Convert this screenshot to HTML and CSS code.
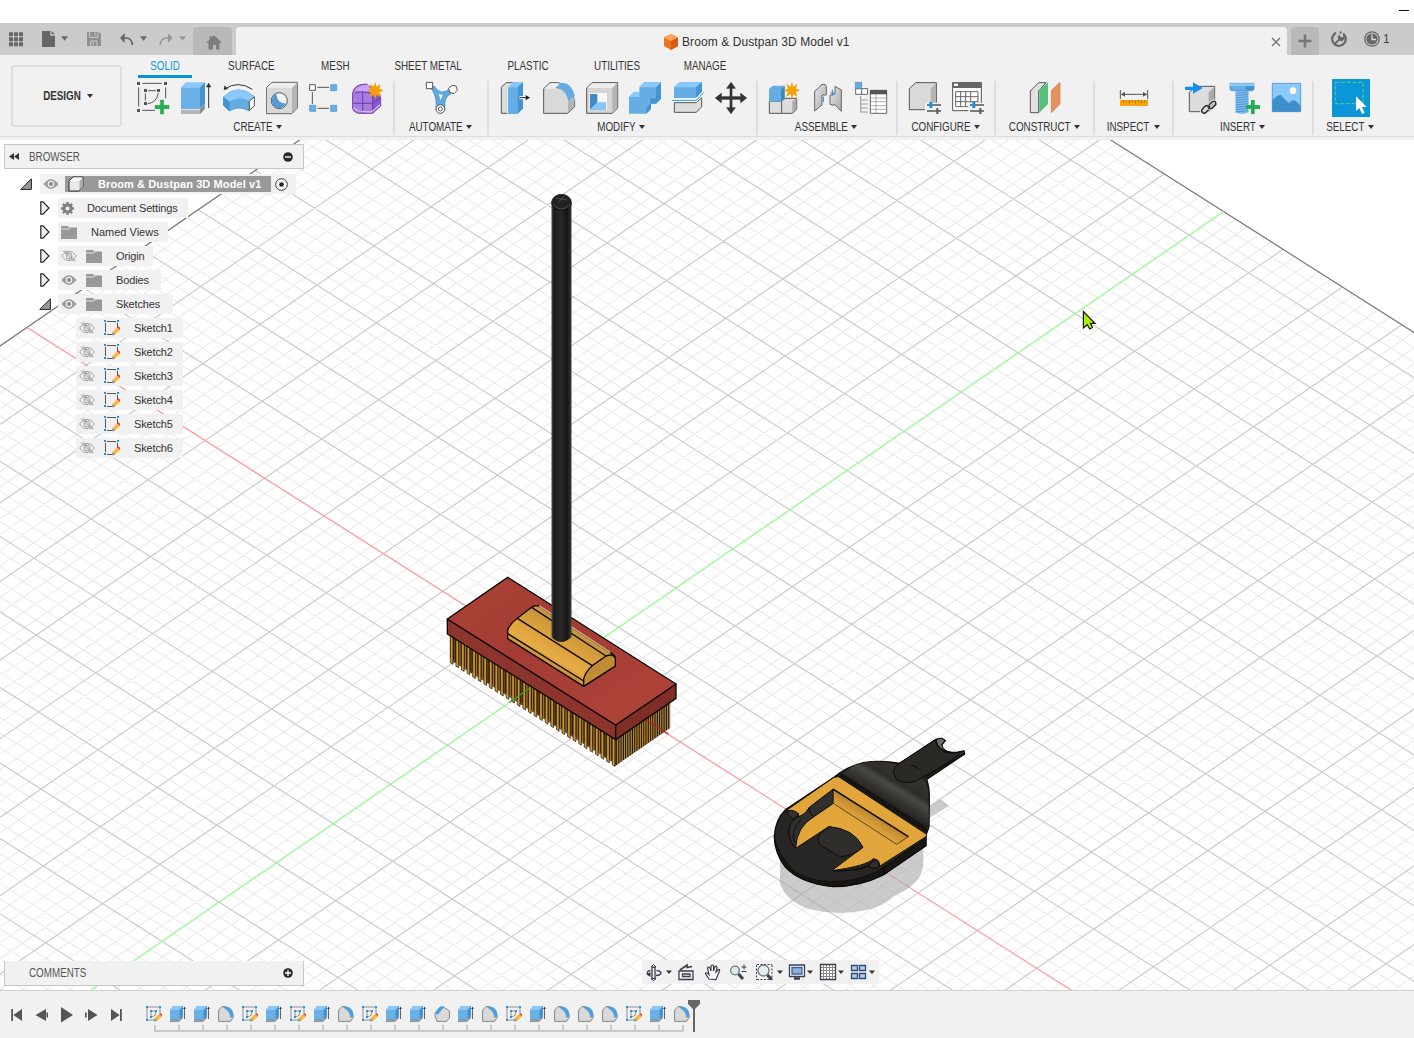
FILE: index.html
```html
<!DOCTYPE html>
<html lang="en">
<head>
<meta charset="utf-8">
<title>Broom &amp; Dustpan 3D Model v1</title>
<link rel="stylesheet" href="styles.css">
</head>
<body>
<svg class="defs" width="0" height="0" aria-hidden="true">
  <defs>
    <linearGradient id="pole"><stop offset="0" stop-color="#4a4a48"/><stop offset=".12" stop-color="#1b1b19"/><stop offset=".45" stop-color="#2a2927"/><stop offset=".8" stop-color="#151513"/><stop offset="1" stop-color="#3c3c3a"/></linearGradient>
    <linearGradient id="redtop" x1="0" y1="0" x2="1" y2="1"><stop offset="0" stop-color="#ad4338"/><stop offset=".4" stop-color="#a33c33"/><stop offset="1" stop-color="#b0443a"/></linearGradient>
    <linearGradient id="hub" gradientUnits="userSpaceOnUse" x1="350" y1="330" x2="420" y2="210"><stop offset="0" stop-color="#b67c26"/><stop offset=".3" stop-color="#e6ac45"/><stop offset=".6" stop-color="#dda23b"/><stop offset="1" stop-color="#c9963c"/></linearGradient>
    <linearGradient id="pan" gradientUnits="userSpaceOnUse" x1="340" y1="240" x2="400" y2="140"><stop offset="0" stop-color="#1d1c1a"/><stop offset=".3" stop-color="#33322f"/><stop offset=".55" stop-color="#4a4946"/><stop offset=".7" stop-color="#2e2d2a"/><stop offset="1" stop-color="#33322f"/></linearGradient>
    <linearGradient id="wall" gradientUnits="userSpaceOnUse" x1="310" y1="315" x2="335" y2="275"><stop offset="0" stop-color="#e3a840"/><stop offset="1" stop-color="#b98429"/></linearGradient>
    <linearGradient id="steel" x2="1" y2="1"><stop offset="0" stop-color="#e8e8e8"/><stop offset="1" stop-color="#a8a8a8"/></linearGradient>
    <symbol id="i-eye" viewBox="0 0 16 12"><path d="M.5 6Q8-3.5 15.500 6Q8 15.500.5 6Z" fill="#9b9b9b"/><circle cx="8" cy="6" r="3.300" fill="#eee"/><circle cx="8" cy="6" r="2.100" fill="#8a8a8a"/></symbol>
    <symbol id="i-hidden" viewBox="0 0 16 12"><g fill="none" stroke="#929292" stroke-width=".9"><path d="M.5 6Q8-3.500 15.500 6Q8 15.500.5 6Z"/><circle cx="8" cy="6" r="3"/><path d="M2 .5L13 11.500M4 .3L14.500 11"/></g></symbol>
    <symbol id="i-folder" viewBox="0 0 16 13"><path d="M0 0H7L8 1.500H16V13H0Z" fill="#999"/><path d="M0 3H8L9 1.800" stroke="#ddd" fill="none"/></symbol>
    <symbol id="i-sk" viewBox="0 0 16 16"><path d="M3 1.500H12M13.500 3V8M1.500 3V12M3 14.500H8" fill="none" stroke="#555"/><path d="M0 0h2v2H0zM13 0h2v2h-2zM0 13h2v2H0z" fill="#1b8fe6"/><path d="M8.500 12L13 7.500L16 10L11 14.800Z" fill="#f5b942"/><path d="M13 7.500L14.300 6.200L16 7.500V10Z" fill="#ee3b3b"/><path d="M8.500 12L8 15.500L11 14.800Z" fill="#888"/></symbol>
    <symbol id="i-closed" viewBox="0 0 10 14"><path d="M.8.8H3L9 7L3 13.200H.8Z" fill="#ededed" stroke="#222" stroke-width="1.200"/></symbol>
    <symbol id="i-open" viewBox="0 0 12 12"><path d="M.8 11.400H11.400V.8Z" fill="#999" stroke="#222"/></symbol>
    <symbol id="t-sketch" viewBox="0 0 16 16"><path d="M2 1H13M14 2V7M1 2V13M2 14H8M5 6V10M6 5H9M10 6Q10 10 6 11" fill="none" stroke="#8f8f8f"/><path d="M0 0h2v2H0zM13 0h2v2h-2zM0 13h2v2H0zM4 4h2v2H4zM9 4h2v2H9zM4 10h2v2H4z" fill="#2b97e8"/><path d="M8.500 12L13 8L16 10.500L11 15Z" fill="#f5b942"/><path d="M13 8L14.500 7L16 8.500V10.500Z" fill="#ee3b3b"/><path d="M8.500 12L8 15.500L11 15Z" fill="#888"/></symbol>
    <symbol id="t-ext" viewBox="0 0 16 16"><path d="M0 13.500V16H9L13 12V9Z" fill="#999"/><path d="M0 4L3 0H13V10L9.500 13.500H0Z" fill="#4793d0"/><path d="M0 4H9.500V13.500H0Z" fill="#6aafe5"/><path d="M0 4L3 0H13L9.500 4Z" fill="#8cc8fa"/><path d="M14.500 2V13" stroke="#666"/><path d="M13.200 3L14.500 .5L15.800 3Z" fill="#333"/></symbol>
    <symbol id="t-fil" viewBox="0 0 16 16"><path d="M.6 4L4 .6H7Q14 3 15.400 11L12.500 15.400H.6Z" fill="#d9d9d9" stroke="#888"/><path d="M5 1.500Q7 .3 10 .8Q15.500 3 15.500 10L12.500 12Q12 5 5 1.500Z" fill="#4c9ede"/></symbol>
    <symbol id="t-cham" viewBox="0 0 16 16"><path d="M.6 9L9 .8L15.400 5V12L12.500 15.400H3Z" fill="#d9d9d9" stroke="#888"/><path d="M0 7.500L6 .5H10.500L4 8.500Z" fill="#4c9ede"/></symbol>
  </defs>
</svg>

<div class="titlebar"><i class="minimize"></i></div>

<div class="tabbar">
  <div class="quick">
    <svg width="193" height="32" viewBox="0 69 579 96">
      <path d="M27 97h12v12H27zm15 0h12v12H42zm15 0h12v12H57zM27 112h12v12H27zm15 0h12v12H42zm15 0h12v12H57zM27 127h12v12H27zm15 0h12v12H42zm15 0h12v12H57z" fill="#666"/>
      <path d="M126 93H151V107H165V141H126Z M155 93L165 103H155Z" fill="#666"/><path d="M183 109H204L194 122Z" fill="#666"/>
      <path d="M261 96H297L303 102V138H261Z" fill="#8f8f8f"/><path d="M269 96V112H294V96M272 138V123H291V138" fill="none" stroke="#cbcbcb" stroke-width="3"/><path d="M285 97v10M279 127v8" stroke="#cbcbcb" stroke-width="3"/>
      <path d="M364 114H378Q396 114 397 135" fill="none" stroke="#666" stroke-width="5"/><path d="M360 114L374 99V129Z" fill="#666"/><path d="M420 109H441L431 122Z" fill="#666"/>
      <path d="M514 114H500Q482 114 481 135" fill="none" stroke="#999" stroke-width="5"/><path d="M518 114L504 99V129Z" fill="#999"/><path d="M537 109H558L548 122Z" fill="#999"/>
    </svg>
  </div>
  <div class="hometab"><svg width="16" height="15" viewBox="0 0 16 15"><path d="M8 0L16 8H13.500V14.500H10V10H7V14.500H2.500V8H0L3.500 4.500V1H5.500V2.500Z" fill="#7d7d7d"/></svg></div>
  <div class="doctab">
    <div class="doctitle"><svg width="14" height="16" viewBox="0 0 14 16"><path d="M7 0L14 3.500V12L7 16L0 12V3.500Z" fill="#ed7425"/><path d="M7 0L14 3.500L7 7L0 3.500Z" fill="#ffa25c"/><path d="M7 7L14 3.500V12L7 16Z" fill="#d75b13"/></svg><span>Broom &amp; Dustpan 3D Model v1</span></div>
    <svg class="close" width="10" height="10" viewBox="0 0 10 10"><path d="M1 1L9 9M9 1L1 9" stroke="#777" stroke-width="1.500"/></svg>
  </div>
  <div class="plustab"><svg width="14" height="14" viewBox="0 0 14 14"><path d="M7 .5V13.500M.5 7H13.500" stroke="#777" stroke-width="2.600"/></svg></div>
  <div class="status">
    <svg width="16" height="16" viewBox="0 0 16 16"><circle cx="8" cy="8" r="6.800" fill="none" stroke="#666" stroke-width="2.200" stroke-dasharray="35 3.500 2 2.200" transform="rotate(-52 8 8)"/><path d="M3 12L7.500 8L6.500 6L8.500 3.500L9.500 6L11.500 6.500L13 4L14 7.500L11 10.500L8.500 9.500L4.500 13.500Z" fill="#666"/></svg>
    <svg width="16" height="16" viewBox="0 0 16 16"><circle cx="8" cy="8" r="7.200" fill="none" stroke="#666" stroke-width="1.300"/><circle cx="8" cy="8" r="5.600" fill="#666"/><path d="M8 3.500V8.500H12" stroke="#ddd" stroke-width="1.300" fill="none"/></svg>
    <span>1</span>
  </div>
</div>

<div class="ribbon">
  <div class="workspace"><b class="narrow">DESIGN</b><i class="caret"></i></div>
  <div class="ribbonmain">
    <div class="tabs">
      <div class="tab tab-solid active"><span class="narrow">SOLID</span></div>
      <div class="tab tab-surface"><span class="narrow">SURFACE</span></div>
      <div class="tab tab-mesh"><span class="narrow">MESH</span></div>
      <div class="tab tab-sheet"><span class="narrow">SHEET METAL</span></div>
      <div class="tab tab-plastic"><span class="narrow">PLASTIC</span></div>
      <div class="tab tab-util"><span class="narrow">UTILITIES</span></div>
      <div class="tab tab-manage"><span class="narrow">MANAGE</span></div>
    </div>
    <div class="groups">
      <div class="group g-create">
        <div class="icons">
          <svg viewBox="411 243 102 102"><path d="M416 262V320M427 250H486M497 262V295M427 331H465M436 280V302M444 272H468M475 279Q470 308 443 311" fill="none" stroke="#555" stroke-width="3"/><path d="M411 246h9v9h-9zM492 246h9v9h-9zM411 327h9v9h-9zM432 267h9v9h-9zM471 267h9v9h-9zM432 306h9v9h-9z" fill="#555"/><path d="M481 300H491V316H507V326H491V342H481V326H465V316H481Z" fill="#25ad51" stroke="#168a3b"/></svg>
          <svg viewBox="540 243 102 102"><path d="M543 329H600L614 314V327L600 342H543Z" fill="#b5b5b5"/><path d="M600 329L614 314V327L600 342Z" fill="#888"/><path d="M543 262L558 247H615L600 262Z" fill="#8ac9fc"/><path d="M600 262L615 247V312L600 327Z" fill="#4593cf"/><path d="M543 262H600V327H543Z" fill="#6aafe5"/><path d="M626 260V324" stroke="#333" stroke-width="3"/><path d="M618 262L626 248L634 262Z" fill="#333"/></svg>
          <svg viewBox="669 243 102 102"><path d="M674 267Q715 240 757 268" fill="none" stroke="#333" stroke-width="3"/><path d="M671 270L674 256L684 267Z" fill="#333"/><path d="M670 291Q715 248 763 290L748 303V333Q715 315 688 333L670 316Z" fill="#65ace3" stroke="#3d84bd" stroke-width="2"/><path d="M670 291Q715 248 763 290L748 303Q715 285 689 305Z" fill="#8ac9fc"/><path d="M670 291L689 305V333L670 316Z" fill="#4593cf"/><path d="M748 303L763 291V318L748 331Z" fill="#fff" stroke="#555" stroke-width="3"/></svg>
          <svg viewBox="798 243 102 102"><path d="M799 263L816 247H892V324L876 341H799Z" fill="#d9d9d9" stroke="#666" stroke-width="3"/><path d="M876 263L891 249V324L876 340Z" fill="#b4b4b4"/><path d="M801 263L816 249H890L876 263Z" fill="#eee"/><circle cx="838" cy="302" r="24" fill="#f3f3f3" stroke="#555" stroke-width="3"/><path d="M829 282A22 22 0 1 0 858 310Q832 312 829 282Z" fill="#529ad4"/></svg>
          <svg viewBox="927 243 102 102"><path d="M952 262H987M937 276V312M952 325H987" stroke="#555" stroke-width="3"/><path d="M929 254h17v17h-17z" fill="#fff" stroke="#555" stroke-width="3"/><path d="M992 254h18v18h-18zM929 316h18v18h-18zM992 316h18v18h-18z" fill="#6aafe5" stroke="#438dc7" stroke-width="2"/></svg>
          <svg viewBox="1056 243 102 102"><path d="M1058 278Q1062 252 1100 252L1142 290V318L1118 340H1076Q1057 337 1057 318Z" fill="#a77bdf" stroke="#7347af" stroke-width="3"/><path d="M1064 272Q1078 254 1105 255L1116 275Z" fill="#c9a4f8"/><path d="M1118 290L1142 282V318L1118 339Z" fill="#8b56cc"/><path d="M1065 280Q1090 270 1118 283M1060 310H1118L1142 292M1088 275V338M1118 280V338" fill="none" stroke="#6c3fa5" stroke-width="3"/><path d="M1062 322Q1066 337 1116 335L1140 314" fill="none" stroke="#d3bcf0" stroke-width="4"/><path d="M1126 246L1130 260L1142 252L1138 266L1151 271L1138 277L1143 291L1130 284L1126 297L1121 284L1108 291L1113 277L1101 271L1113 266L1109 252L1121 259Z" fill="#f6a109"/></svg>
        </div>
        <div class="label"><span class="narrow">CREATE</span><i class="caret"></i></div>
      </div>
      <div class="group g-automate long">
        <div class="icons"><svg viewBox="105 93 102 102"><path d="M122 114Q142 136 138 178A14 14 0 0 0 165 178Q160 140 184 130L177 118Q152 138 132 108Z" fill="#5fa8e0" stroke="#3e86bf" stroke-width="2"/><path d="M146 132L158 134L152 150Z" fill="#fff"/><path d="M109 97h19v19h-19z" fill="#fff" stroke="#555" stroke-width="3"/><path d="M186 106L198 108L202 121L192 131L179 127L176 115Z" fill="#fff" stroke="#555" stroke-width="3"/><circle cx="151" cy="177" r="13" fill="#fff" stroke="#555" stroke-width="3"/><circle cx="151" cy="177" r="6" fill="none" stroke="#555" stroke-width="3"/></svg></div>
        <div class="label"><span class="narrow">AUTOMATE</span><i class="caret"></i></div>
      </div>
      <div class="group g-modify">
        <div class="icons">
          <svg viewBox="330 93 102 102"><path d="M334 112L348 98H370L352 112V190H334Z" fill="#ddd" stroke="#555" stroke-width="3"/><path d="M350 112L367 97V190H350Z" fill="#f1f1f1"/><path d="M354 112L369 97H399V175L382 192H354Z" fill="#66ade4"/><path d="M354 112L369 97H399L383 112Z" fill="#8ac9fc"/><path d="M383 112L399 97V175L383 191Z" fill="#4593cf"/><path d="M389 143H412" stroke="#fff" stroke-width="9"/><path d="M390 143H410" stroke="#222" stroke-width="3"/><path d="M407 135L420 143L407 151Z" fill="#222"/></svg>
          <svg viewBox="459 93 102 102"><path d="M461 116L480 98H505Q548 110 554 155V170L533 190H461Z" fill="#d9d9d9" stroke="#555" stroke-width="3"/><path d="M463 116L481 100H507L496 116Z" fill="#eee"/><path d="M496 114L513 98Q545 98 554 137L535 155Q530 118 496 114Z" fill="#65ace3"/><path d="M534 158L553 140V168L534 188Z" fill="#b4b4b4"/></svg>
          <svg viewBox="588 93 102 102"><path d="M590 114L606 98H683V174L667 190H590Z" fill="#d5d5d5" stroke="#555" stroke-width="3"/><path d="M592 114L607 100H681L667 114Z" fill="#eee"/><path d="M667 114L682 99V173L667 189Z" fill="#b4b4b4"/><path d="M598 129H651V180H598Z" fill="#fafafa"/><path d="M600 132L622 132V158L600 180Z" fill="#3f8bc5"/><path d="M600 180L622 157H648V180Z" fill="#87c5f7"/></svg>
          <svg viewBox="717 93 102 102"><path d="M748 112L762 97H813V146L798 161H783V177L769 191H717V141L731 127H748Z" fill="#66ade4"/><path d="M798 112L813 97V146L798 161H783V177L769 191V175L781 160V145L798 145Z" fill="#4593cf"/><path d="M748 112L762 97H813L798 112ZM717 141L731 127H748V141Z" fill="#8ac9fc"/></svg>
          <svg viewBox="846 93 102 102"><path d="M852 112L868 97H936V125L917 144H852Z" fill="#66ade4"/><path d="M852 112L868 97H936L918 112Z" fill="#8ac9fc"/><path d="M918 112L936 97V125L918 144Z" fill="#4593cf"/><path d="M853 158H919L935 143V170L919 187H853Z" fill="#ddd" stroke="#555" stroke-width="3"/><path d="M846 151H919L941 128" fill="none" stroke="#fff" stroke-width="9"/><path d="M846 151H919L941 128" fill="none" stroke="#168ded" stroke-width="3"/></svg>
          <svg viewBox="975 93 102 102"><path d="M1023 97L1036 115H1026V140H1052V130L1070 144L1052 158V148H1026V173H1036L1023 191L1010 173H1020V148H994V158L976 144L994 130V140H1020V115H1010Z" fill="#333" stroke="#333" stroke-width="2"/></svg>
        </div>
        <div class="label"><span class="narrow">MODIFY</span><i class="caret"></i></div>
      </div>
      <div class="group g-assemble long">
        <div class="icons">
          <svg viewBox="54 93 102 102"><path d="M58 154H95L105 145H140V178L127 190H58Z" fill="#ddd" stroke="#555" stroke-width="3"/><path d="M127 154L139 146V178L127 189Z" fill="#aaa"/><path d="M95 155V190" stroke="#555" stroke-width="3"/><path d="M57 117L69 107H104V146L93 155H57Z" fill="#65ace3"/><path d="M93 119L104 108V146L93 155Z" fill="#3f86bf"/><path d="M126 96L130 110L142 101L138 116L151 121L138 126L142 141L130 133L126 146L121 133L108 141L113 126L101 121L113 116L109 101L121 110Z" fill="#f6a109"/></svg>
          <svg viewBox="183 93 102 102"><g stroke="#666" stroke-width="3" fill="url(#steel)"><path d="M194 123L208 112L214 104Q229 100 229 111V135H216V165L194 183Z"/><path d="M274 120L255 109V132L240 136V163Q250 168 255 164L274 184Z"/></g><path d="M220 140V156M247 119V137M241 129H253" stroke="#168ded" stroke-width="3"/></svg>
          <svg viewBox="312 93 102 102"><path d="M317 116H353V133H317ZM335 116V133" fill="#fff" stroke="#666" stroke-width="3"/><path d="M316 97h19v19h-19z" fill="#65ace3" stroke="#3e86bf" stroke-width="2"/><path d="M332 138V187M332 150H353M332 162H353M332 174H353M332 186H353" stroke="#999" stroke-width="3"/><path d="M361 121h49v69h-49z" fill="#fff" stroke="#666" stroke-width="3"/><path d="M360 120h51v13h-51z" fill="#555"/><path d="M378 133V189M361 144H410M361 155H410M361 167H410M361 178H410" stroke="#888" stroke-width="2"/></svg>
        </div>
        <div class="label"><span class="narrow">ASSEMBLE</span><i class="caret"></i></div>
      </div>
      <div class="group g-configure long">
        <div class="icons">
          <svg viewBox="474 93 102 102"><path d="M478 116L497 98H559V162L543 179H478Z" fill="#d9d9d9" stroke="#555" stroke-width="3"/><path d="M542 116L558 99V164L542 178Z" fill="#b4b4b4"/><path d="M525 158H580V195H525Z" fill="#f1f1f1"/><path d="M531 165H573M531 183H573" stroke="#555" stroke-width="4"/><path d="M538 156H547V174H538Z" fill="#168ded"/><path d="M559 174h6v18h-6z" fill="#555"/></svg>
          <svg viewBox="603 93 102 102"><path d="M608 98H694V182H608Z" fill="#fff" stroke="#555" stroke-width="3"/><path d="M607 97h88v17h-88z" fill="#666"/><path d="M612 101h12v7h-12z" fill="#fff"/><path d="M617 125H684V170H617ZM617 140H684M617 155H684M632 125V170M647 125V170M662 125V170" fill="none" stroke="#666" stroke-width="3"/><path d="M655 158H705V195H655Z" fill="#f1f1f1"/><path d="M660 165H702M660 183H702" stroke="#555" stroke-width="4"/><path d="M667 156H676V174H667Z" fill="#168ded"/><path d="M688 174h6v18h-6z" fill="#555"/></svg>
        </div>
        <div class="label"><span class="narrow">CONFIGURE</span><i class="caret"></i></div>
      </div>
      <div class="group g-construct long">
        <div class="icons"><svg viewBox="834 93 102 102"><path d="M841 123L866 98H888L866 123V188H841Z" fill="#e2e2e2" stroke="#555" stroke-width="3"/><path d="M868 121L894 97V162L868 188Z" fill="#55c078"/><path d="M904 121L930 97V162L904 188Z" fill="#e3935f" stroke="#d17a43" stroke-width="2"/></svg></div>
        <div class="label"><span class="narrow">CONSTRUCT</span><i class="caret"></i></div>
      </div>
      <div class="group g-inspect">
        <div class="icons"><svg viewBox="111 243 102 102"><path d="M121 270V297M203 270V297M128 283H196" stroke="#555" stroke-width="3"/><path d="M122 283L135 276V290ZM202 283L189 276V290Z" fill="#555"/><path d="M120 300h84v18h-84z" fill="#f9a50a"/><path d="M130 301v7M139 301v5M148 301v9M157 301v5M166 301v9M175 301v5M184 301v9M194 301v7" stroke="#7a4d00" stroke-width="2"/></svg></div>
        <div class="label"><span class="narrow">INSPECT</span><i class="caret"></i></div>
      </div>
      <div class="group g-insert">
        <div class="icons">
          <svg viewBox="312 243 102 102"><path d="M328 277L346 259H404V317L387 335H328Z" fill="#ddd" stroke="#555" stroke-width="3"/><path d="M386 277L403 261V318L386 334Z" fill="#aaa"/><path d="M315 260H339V247L368 264L339 281V270H315Z" fill="#168ded"/><g fill="none"><path d="M389 313L397 305Q409 300 407 314L396 325Q387 329 384 320M390 322Q382 313 374 320L365 330Q365 341 376 339L386 329" stroke="#f1f1f1" stroke-width="10"/><path d="M387 315L397 305Q409 300 407 314L396 325Q387 329 384 320M391 322Q382 313 374 320L365 330Q365 341 376 339L386 329" stroke="#333" stroke-width="5"/></g></svg>
          <svg viewBox="441 243 102 102"><path d="M450 250H522V268L518 272H454L450 268Z" fill="#65ace3" stroke="#3e86bf" stroke-width="2"/><path d="M450 250H522V258H450Z" fill="#8ac9fc"/><path d="M497 258H522V270H497Z" fill="#4593cf"/><path d="M467 273H505V337Q486 347 467 337Z" fill="#7bbcf0"/><path d="M466 280L506 276M466 287L506 283M466 294L506 290M466 301L506 297M466 308L506 304M466 315L506 311M466 322L506 318M466 329L506 325M466 336L506 332" stroke="#3e86bf" stroke-width="2"/><path d="M513 300H524V315H540V327H524V342H513V327H498V315H513Z" fill="#25ad51"/></svg>
          <svg viewBox="570 243 102 102"><path d="M577 250h85v85h-85z" fill="#8ac9fc" stroke="#5c9fd6" stroke-width="3"/><path d="M577 301Q592 285 602 284L625 309L636 302Q645 297 662 318V335H577Z" fill="#3f8fcb"/><circle cx="639" cy="272" r="10" fill="#fffce0"/></svg>
        </div>
        <div class="label"><span class="narrow">INSERT</span><i class="caret"></i></div>
      </div>
      <div class="group g-select">
        <div class="icons"><svg class="big" viewBox="756 237 114 114"><path d="M756 237h114v114H756z" fill="#0c96da"/><path d="M766 247H849V311H766Z" fill="none" stroke="#4fd07c" stroke-width="3" stroke-dasharray="12 5"/><path d="M828 289V333L838 324L846 342L854 338L846 321H860Z" fill="#fff"/></svg></div>
        <div class="label"><span class="narrow">SELECT</span><i class="caret"></i></div>
      </div>
    </div>
  </div>
</div>

<div class="viewport">
  <svg class="scene" width="1414" height="850" viewBox="0 140 1414 850">
    <g id="grid"></g>
    <g transform="translate(430 560) scale(.33333)" stroke-linejoin="round">
      <g id="bristles"></g>
      <path d="M303 381L238 427" stroke="#3f9a1f" stroke-width="4"/>
      <path d="M650 480L715 522" stroke="#b3251a" stroke-width="4"/>
      <g stroke="#0c0807" stroke-width="4">
        <path d="M52 177L557 495V539L52 222Z" fill="#8d352d"/>
        <path d="M557 495L738 372V415L557 539Z" fill="#7f2e27"/>
        <path d="M233 52L738 372L557 495L52 177Z" fill="url(#redtop)"/>
        <path d="M233 236V210Q240 192 262 175L305 142Q315 134 326 138L545 280Q556 286 556 297V318L461 379Z" fill="url(#hub)"/>
        <path d="M461 379V357Q466 335 487 317L528 288Q550 280 556 294V318Z" fill="#c28c34"/>
        <path d="M262 175L487 317M305 142L528 288M233 221L461 363" fill="none"/>
      </g>
      <path d="M328 138L541 277" stroke="#c9a781" stroke-width="5"/>
    </g>
    <path d="M551.500 203V637Q561 647 571.500 637V203Z" fill="url(#pole)"/>
    <ellipse cx="561.500" cy="202.500" rx="9.800" ry="8" fill="#222220" stroke="#111"/>
    <path d="M552.500 204Q561 214 570.500 204M556 198L567 200M558 203L564 196" fill="none" stroke="#555" stroke-width=".8"/>

    <g transform="translate(760 720) scale(.33333)" stroke-linejoin="round">
      <path d="M60 420V490Q75 540 140 565Q230 590 320 570Q370 558 400 530Q490 490 490 430V370ZM508 260L542 238L567 257L508 294Z" fill="#a8a8a8" fill-opacity=".6"/>
      <path d="M222 172Q260 140 310 128Q360 120 420 130L528 58L545 55L556 62L545 75Q548 100 590 97L612 93L614 102L500 178Q508 200 508 235L507 320L498 345V377L370 465Q300 500 220 500Q120 490 75 440Q45 400 43 350Q45 300 78 268Z" fill="#272624" stroke="#0a0a0a" stroke-width="4"/>
      <path d="M236 169Q270 138 310 128Q365 118 430 138L490 180Q506 200 506 235V330Z" fill="url(#pan)"/>
      <path d="M43 352Q55 410 105 455Q170 495 260 482Q330 472 372 440L498 354V377L370 465Q300 500 220 500Q120 490 75 440Q45 400 43 352Z" fill="#171614" stroke="#050505" stroke-width="2"/>
      <path d="M372 440V465" stroke="#050505" stroke-width="3"/>
      <path d="M78 272L222 172L236 170L500 343L498 350L360 438Q356 418 340 416Q320 438 215 452L306 384Q275 328 206 320L107 385Q84 350 88 325Q92 298 120 290Q100 268 78 272Z" fill="#e1a53c" stroke="#17120a" stroke-width="3"/>
      <path d="M220 207V250L162 290Q110 320 107 384Q84 362 87 325Q94 296 125 286Q138 280 148 262Z" fill="#302f2b" stroke="#090909" stroke-width="3"/>
      <path d="M148 262Q145 280 162 290M104 368Q90 335 124 298" fill="none" stroke="#0b0b0b" stroke-width="3"/>
      <path d="M220 207L445 350L410 373L220 250Z" fill="url(#wall)" stroke="#17120a" stroke-width="2"/>
      <path d="M220 208L445 350" stroke="#111" stroke-width="5"/>
      <path d="M80 278Q92 262 117 282L100 298Z" fill="#343330" stroke="#0b0b0b" stroke-width="3"/>
      <path d="M206 320Q282 325 309 382Q280 408 240 410L180 375Q168 355 180 342Z" fill="#302e2a" stroke="#0b0b0b" stroke-width="3"/>
      <path d="M325 438Q348 410 356 424L358 440Q345 450 325 440Z" fill="#302f2b" stroke="#080808" stroke-width="3"/>
      <path d="M215 452Q285 455 325 438" fill="none" stroke="#080808" stroke-width="4"/>
      <path d="M236 170L500 340V320L245 160Z" fill="#161513"/>
      <path d="M528 58Q524 78 554 96Q575 104 612 93L614 102L470 182Q435 195 410 178Q390 155 414 132Z" fill="#2a2926" stroke="#0a0a0a" stroke-width="3"/>
      <path d="M528 58L545 55L556 62L545 72Q548 94 575 98Q532 92 528 58Z" fill="#71706d" stroke="#0a0a0a" stroke-width="3"/>
      <path d="M453 137Q463 134 476 147M598 104L496 172" fill="none" stroke="#090909" stroke-width="3"/>
    </g>
    <path d="M1083.400 311.500V328L1087.300 324.700L1089.700 329L1092.500 327.500L1090.500 323.300H1095Z" fill="#a8f000" stroke="#151515" stroke-width="1.200"/>
  </svg>

  <div class="browser">
    <div class="panelhead"><svg width="10" height="7" viewBox="0 0 10 7"><path d="M5 0V7L0 3.500ZM10 0V7L5 3.500Z" fill="#333"/></svg><span class="narrow">BROWSER</span><svg class="knob" width="10" height="10" viewBox="0 0 10 10"><circle cx="5" cy="5" r="4.800" fill="#2b2b2b"/><path d="M2 5H8" stroke="#fff" stroke-width="1.400"/></svg></div>
    <div class="row lvl0"><svg class="arrow" width="12" height="12"><use href="#i-open"/></svg>
      <div class="cell rootcell"><svg width="16" height="12"><use href="#i-eye"/></svg>
        <div class="rootname"><svg width="16" height="16" viewBox="0 0 16 16"><path d="M1 5L5 1H15V11L11 15H1Z" fill="#e8e8ec" stroke="#333"/><path d="M11.500 5L15 1.500V11L11.500 14.500Z" fill="#a9a9b5"/><path d="M2 5L5.500 1.500H14.500L11 5Z" fill="#fff"/></svg><b>Broom &amp; Dustpan 3D Model v1</b></div>
        <svg width="13" height="13" viewBox="0 0 13 13"><circle cx="6.500" cy="6.500" r="5.800" fill="#fff" stroke="#333"/><circle cx="6.500" cy="6.500" r="2.300" fill="#222"/></svg></div></div>
    <div class="row lvl1"><svg class="arrow" width="10" height="14"><use href="#i-closed"/></svg><div class="cell c-docs"><svg width="13" height="13" viewBox="0 0 13 13"><circle cx="6.500" cy="6.500" r="3.500" fill="none" stroke="#808080" stroke-width="3"/><path d="M6.500 0V2M6.500 11V13M0 6.500H2M11 6.500H13M1.900 1.900L3.300 3.300M9.700 9.700L11.100 11.100M1.900 11.100L3.300 9.700M9.700 3.300L11.100 1.900" stroke="#808080" stroke-width="2.400"/></svg><span>Document Settings</span></div></div>
    <div class="row lvl1"><svg class="arrow" width="10" height="14"><use href="#i-closed"/></svg><div class="cell c-views"><svg width="16" height="13"><use href="#i-folder"/></svg><span>Named Views</span></div></div>
    <div class="row lvl1"><svg class="arrow" width="10" height="14"><use href="#i-closed"/></svg><div class="cell c-origin"><svg width="16" height="12"><use href="#i-hidden"/></svg><svg class="fold" width="16" height="13"><use href="#i-folder"/></svg><span>Origin</span></div></div>
    <div class="row lvl1"><svg class="arrow" width="10" height="14"><use href="#i-closed"/></svg><div class="cell c-bodies"><svg width="16" height="12"><use href="#i-eye"/></svg><svg class="fold" width="16" height="13"><use href="#i-folder"/></svg><span>Bodies</span></div></div>
    <div class="row lvl1"><svg class="arrow" width="12" height="12"><use href="#i-open"/></svg><div class="cell c-sketches"><svg width="16" height="12"><use href="#i-eye"/></svg><svg class="fold" width="16" height="13"><use href="#i-folder"/></svg><span>Sketches</span></div></div>
    <div class="row lvl2"><div class="cell c-sk"><svg width="16" height="12"><use href="#i-hidden"/></svg><svg class="sk" width="16" height="16"><use href="#i-sk"/></svg><span>Sketch1</span></div></div>
    <div class="row lvl2"><div class="cell c-sk"><svg width="16" height="12"><use href="#i-hidden"/></svg><svg class="sk" width="16" height="16"><use href="#i-sk"/></svg><span>Sketch2</span></div></div>
    <div class="row lvl2"><div class="cell c-sk"><svg width="16" height="12"><use href="#i-hidden"/></svg><svg class="sk" width="16" height="16"><use href="#i-sk"/></svg><span>Sketch3</span></div></div>
    <div class="row lvl2"><div class="cell c-sk"><svg width="16" height="12"><use href="#i-hidden"/></svg><svg class="sk" width="16" height="16"><use href="#i-sk"/></svg><span>Sketch4</span></div></div>
    <div class="row lvl2"><div class="cell c-sk"><svg width="16" height="12"><use href="#i-hidden"/></svg><svg class="sk" width="16" height="16"><use href="#i-sk"/></svg><span>Sketch5</span></div></div>
    <div class="row lvl2"><div class="cell c-sk"><svg width="16" height="12"><use href="#i-hidden"/></svg><svg class="sk" width="16" height="16"><use href="#i-sk"/></svg><span>Sketch6</span></div></div>
  </div>

  <div class="comments"><span class="narrow">COMMENTS</span><svg class="knob" width="10" height="10" viewBox="0 0 10 10"><circle cx="5" cy="5" r="4.800" fill="#2b2b2b"/><path d="M2 5H8M5 2V8" stroke="#fff" stroke-width="1.300"/></svg></div>

  <div class="navbar">
    <svg width="237" height="24" viewBox="642 960 237 24">
      <g fill="none" stroke="#3c3f4a" stroke-width="1.300">
        <path d="M652 967H655V979H652ZM648 974.500Q645.500 971.500 650.500 970.500M656.500 970.500Q661 971 661 973Q660.500 975.500 656 975.500"/><path d="M651 967L653.500 964.500L656 967ZM651 978.500L653.500 980.500L656 978.500Z" fill="#fff" stroke-width="1"/>
        <path d="M679 971H693V979.500H679ZM682.500 974H690V976.500H682.500Z"/><path d="M680 970L687 965V967.500L692 966.500" stroke-width="1.600"/>
        <path d="M709 979L705.500 973.500Q705.500 972 708 973.500L709 974.500L707.500 968Q708.500 966 710 968L711 971V966Q712.500 964 713.500 966V971L715 966.500Q716.500 965.500 717 967.500L716 972L718.500 969.500Q720 969 719.500 971L717 977L716 979.500Z" fill="#fff" stroke-width="1.200"/>
        <circle cx="735" cy="970.500" r="4.300" fill="#dfe9e6" stroke="#6b7480"/><path d="M738.500 974L743 979" stroke-width="3"/><path d="M741.500 967H746.500M744 964.500V969.500M741.500 971.500H746.500" stroke-width="1"/>
        <path d="M757 964.500H772M757 979.500H772M756.500 965V980M772 965V980" stroke-width="1" stroke-dasharray="2 1.500"/><circle cx="763.500" cy="970.500" r="5.500" fill="#e3efec" stroke="#6b7480"/><path d="M767.500 975L771.500 979.500" stroke-width="3"/>
        <path d="M789.500 965H804.500V976.500H789.500Z" fill="#fff"/><path d="M792 967.500H802V974H792Z" fill="#8fb1df" stroke="#44629a"/><path d="M794 978.500H800" stroke-width="2.500"/>
        <path d="M820.500 964.500H835.500V979.500H820.500Z" fill="#fff"/><path d="M823.500 965V979M826.500 965V979M829.500 965V979M832.500 965V979M821 967.500H835M821 970.500H835M821 973.500H835M821 976.500H835" stroke="#888" stroke-width="1"/>
        <path d="M851.500 965.500H857.500V970.500H851.500ZM859.500 965.500H865.500V970.500H859.500ZM851.500 973.500H857.500V978.500H851.500ZM859.500 973.500H865.500V978.500H859.500Z" fill="#b5cbe4" stroke="#2c4c7c"/>
      </g>
      <path d="M646.500 974.500L650.500 972V977ZM666 970.500H672L669 974ZM777 970.500H783L780 974ZM807 970.500H813L810 974ZM838 970.500H844L841 974ZM869 970.500H875L872 974Z" fill="#333"/>
    </svg>
  </div>
</div>

<div class="timeline">
  <svg class="transport" width="144" height="47" viewBox="0 991 144 47">
    <path d="M11.200 1009H13V1021H11.200ZM22 1009V1021L13.300 1015ZM46 1009V1021L35.500 1015ZM46.500 1012.500H48V1017.500H46.500ZM61 1007V1022.500L73 1015ZM85 1012.500H86.700V1017.500H85ZM88 1009V1021L97.500 1015ZM111 1009V1021L119.700 1015ZM120 1009H121.800V1021H120Z" fill="#555"/>
  </svg>
  <div class="history">
    <div class="feats">
      <svg><use href="#t-sketch"/></svg><svg><use href="#t-ext"/></svg><svg><use href="#t-ext"/></svg><svg><use href="#t-fil"/></svg><svg><use href="#t-sketch"/></svg><svg><use href="#t-ext"/></svg><svg><use href="#t-sketch"/></svg><svg><use href="#t-ext"/></svg><svg><use href="#t-fil"/></svg><svg><use href="#t-sketch"/></svg><svg><use href="#t-ext"/></svg><svg><use href="#t-ext"/></svg><svg><use href="#t-cham"/></svg><svg><use href="#t-ext"/></svg><svg><use href="#t-fil"/></svg><svg><use href="#t-sketch"/></svg><svg><use href="#t-ext"/></svg><svg><use href="#t-fil"/></svg><svg><use href="#t-fil"/></svg><svg><use href="#t-fil"/></svg><svg><use href="#t-sketch"/></svg><svg><use href="#t-ext"/></svg><svg><use href="#t-fil"/></svg>
    </div>
    <div class="track"></div>
  </div>
  <svg class="marker" width="12" height="32" viewBox="0 0 12 32"><path d="M0 0H12V4L7 9V32H5V9L0 4Z" fill="#666"/></svg>
</div>
<script src="scene.js"></script>
</body>
</html>
```
FILE: styles.css
```css
* { box-sizing: border-box; }
body { margin: 0; width: 1414px; height: 1038px; overflow: hidden; background: #fff; color: #333; font: 12px "Liberation Sans", Arial, sans-serif; display: flex; flex-direction: column; }
svg { display: block; flex: none; }
.defs { position: absolute; }
.narrow { display: inline-block; transform: scaleX(.82); white-space: nowrap; }
.caret { width: 0; height: 0; border: 3.5px solid transparent; border-top: 4.5px solid #333; border-bottom: 0; flex: none; }

.titlebar { height: 23px; flex: none; display: flex; justify-content: flex-end; padding: 10px 5px 0 0; }
.minimize { width: 10px; height: 1px; background: #111; }

.tabbar { height: 32px; flex: none; background: #cbcbcb; display: flex; align-items: flex-end; }
.quick { width: 193px; }
.hometab, .plustab { height: 28px; background: #b9b9b9; border-radius: 4px 4px 0 0; display: flex; align-items: center; justify-content: center; }
.hometab { width: 39px; padding: 3px 0 0 3px; }
.doctab { width: 1051px; height: 28px; margin-left: 4px; background: #f1f1f1; border-radius: 4px 4px 0 0; display: flex; align-items: center; padding: 1px 0 0 428px; }
.doctitle { display: flex; align-items: center; gap: 4px; letter-spacing: .08px; white-space: nowrap; }
.close { margin: 0 6px 0 auto; }
.plustab { width: 28px; margin-left: 4px; }
.status { height: 32px; display: flex; align-items: center; gap: 17px; margin-left: 12px; color: #444; }
.status span { margin-left: -14px; }

.ribbon { height: 82px; flex: none; background: #f1f1f1; border-bottom: 1px solid #dcdcdc; display: flex; padding-left: 11px; }
.workspace { width: 111px; height: 62px; margin-top: 10px; border: 2px solid #dedede; border-radius: 4px; display: flex; align-items: center; justify-content: center; gap: 1px; padding-right: 1px; flex: none; }
.tabs { height: 24px; display: flex; padding-left: 16px; }
.tab { height: 23px; display: flex; align-items: center; justify-content: center; padding-top: 2px; border-bottom: 3px solid transparent; }
.tab.active { border-bottom-color: #0c96da; color: #0c96da; }
.tab-solid { width: 54px; }
.tab-surface { width: 119px; }
.tab-mesh { width: 48px; }
.tab-sheet { width: 138px; }
.tab-plastic { width: 62px; }
.tab-util { width: 116px; }
.tab-manage { width: 60px; }

.groups { display: flex; padding-left: 2px; }
.group { --half: 4.2px; height: 54px; margin-top: 2px; border-right: 2px solid #dfdfdf; display: flex; flex-direction: column; }
.group.long { --half: 6.2px; }
.icons { height: 36px; display: flex; gap: 9px; flex: none; }
.icons svg { width: 34px; height: 34px; }
.icons svg.big { width: 38px; height: 38px; margin-top: -2px; }
.label { height: 20px; display: flex; justify-content: center; align-items: center; flex: none; margin-left: calc(-1px - var(--half)); }
.label .caret { margin-left: calc(3.5px - var(--half)); margin-top: -1px; }
.g-create { width: 271px; } .g-create .icons { padding-left: 13px; }
.g-automate { width: 94px; } .g-automate .icons { padding-left: 30px; }
.g-modify { width: 269px; } .g-modify .icons { padding-left: 11px; }
.g-modify .label { margin-left: -7px; }
.g-assemble { width: 140px; } .g-assemble .icons { padding-left: 10px; }
.g-configure { width: 98px; } .g-configure .icons { padding-left: 10px; }
.g-construct { width: 99px; } .g-construct .icons { padding-left: 32px; }
.g-inspect { width: 79px; } .g-inspect .icons { padding-left: 22px; }
.g-insert { width: 140px; } .g-insert .icons { padding-left: 10px; }
.g-select { width: 74px; border-right: 0; } .g-select .icons { padding-left: 18px; }

.viewport { height: 853px; flex: none; position: relative; overflow: hidden; border-top: 3px solid #f1f1f1; }
.browser { position: absolute; left: 4px; top: 4px; width: 300px; font-size: 11px; }
.panelhead { height: 25px; background: #f1f1f1; border: 1px solid #c6c6c6; display: flex; align-items: center; padding: 0 10.5px 0 4px; font-size: 12px; margin-bottom: 3px; }
.panelhead span, .comments span { transform-origin: left; color: #555; }
.panelhead span { margin-left: 10px; }
.knob { margin-left: auto; }
.row { height: 24px; display: flex; align-items: center; }
.cell { height: 20px; background: #f1f1f1; display: flex; align-items: center; white-space: nowrap; letter-spacing: -.14px; }
.lvl0 { padding-left: 16px; }
.lvl0 .arrow { margin-right: 8px; }
.lvl1 { padding-left: 35px; }
.lvl1 .arrow { width: 12px; margin-right: 7px; }
.lvl1 .cell { padding-left: 3px; }
.lvl2 { padding-left: 72px; }
.rootcell { width: 256px; padding-left: 3px; letter-spacing: .1px; }
.rootname { width: 206px; height: 16px; margin: 0 4px 0 6px; background: #999; color: #fff; display: flex; align-items: center; padding-left: 3px; }
.rootname b { margin-left: 14px; }
.c-docs { width: 130px; } .c-docs span { margin-left: 13px; }
.c-views { width: 110px; } .c-views span { margin-left: 14px; letter-spacing: 0; }
.c-origin { width: 95px; } .c-bodies { width: 103px; } .c-sketches { width: 115px; }
.fold { margin: 0 14px 0 9px; }
.c-sk { width: 107px; padding-left: 3px; }
.sk { margin: 0 14px 0 9px; }

.comments { position: absolute; left: 4px; top: 821px; width: 300px; height: 25px; background: #f1f1f1; border: 1px solid #c6c6c6; border-top: 0; display: flex; align-items: center; padding: 0 10.5px 0 24px; }
.navbar { position: absolute; left: 642px; top: 820px; background: #f1f1f1; }

.timeline { height: 48px; flex: none; background: #f1f1f1; border-top: 1px solid #d2d2d2; display: flex; }
.history { width: 544px; padding-top: 15px; }
.feats { display: flex; gap: 8px; padding-left: 2px; }
.feats svg { width: 16px; height: 16px; }
.track { width: 530px; height: 7px; margin: 3px 0 0 10px; border-bottom: 2px solid #c9c9c9; background: repeating-linear-gradient(90deg, #c9c9c9 0 2px, transparent 2px 24px); }
.marker { margin-top: 9px; }
```
FILE: scene.js
```js
// Ground plane: origin and the screen vectors of one major cell along X and Y.
const O = [561.6, 666.7], A = [59.4, 37.7], B = [57.07, -39.23];
const U0 = -9, U1 = 22, V0 = -16, V1 = 11.6;
const at = (u, v) => (O[0] + u * A[0] + v * B[0]).toFixed(1) + ' ' + (O[1] + u * A[1] + v * B[1]).toFixed(1);
const seg = (u, v, p, q) => 'M' + at(u, v) + 'L' + at(p, q);
let minor = '', major = '';
for (let i = U0 * 5; i <= U1 * 5; i++) {
  const s = seg(i / 5, V0, i / 5, V1);
  if (i % 5) minor += s; else if (i) major += s;
}
for (let i = V0 * 5; i <= V1 * 5; i++) {
  const s = seg(U0, i / 5, U1, i / 5);
  if (i % 5) minor += s; else if (i) major += s;
}
const line = (d, c, w) => `<path d="${d}" fill="none" stroke="${c}" stroke-width="${w}"/>`;
document.getElementById('grid').innerHTML =
  line(minor, '#ebebeb', 1.1) + line(major, '#cccccc', 1.2) +
  line(seg(U0, V0, U0, V1) + seg(U0, V1, U1, V1), '#7c7c7c', 1.2) +
  line(seg(U0, 0, U1, 0), '#ff9494', 1.2) + line(seg(0, V0, 0, V1), '#8dfb8d', 1.2);

// Brush bristles under the head: front row, then the end row.
let b = '<path d="M60 226L557 535V606L548 600L60 292Z" fill="#4a3512"/><path d="M557 535L719 428V505L552 620Z" fill="#6d4c18"/>';
for (let i = 0; i < 30; i++) {
  const x = 61 + i * 16.75, t = 226 + (x - 61) * .63, e = 308 + (x - 61) * .63;
  b += `<path d="M${x + 9} ${t}V${e - 3}L${x + 15} ${e}V${t + 6}Z" fill="${i % 3 ? '#a8772a' : '#6b4b19'}" stroke="#120d05" stroke-width="1.6"/>`;
  b += `<path d="M${x} ${t}V${e}L${x + 8} ${e + 5}V${t + 5}Z" fill="#cf9535" stroke="#120d05" stroke-width="2"/>`;
}
for (let i = 0; i < 24; i++) {
  const x = 560 + i * 6.8, t = 533 - (x - 560) * .66, e = 614 - (x - 560) * .69;
  b += `<path d="M${x} ${t}V${e}" stroke="#120d05" stroke-width="2.5"/><path d="M${x + 3} ${t}V${e - 2}" stroke="${i > 7 && i < 17 ? '#c08a2e' : '#a98a55'}" stroke-width="3"/>`;
}
document.getElementById('bristles').innerHTML = b;
```
